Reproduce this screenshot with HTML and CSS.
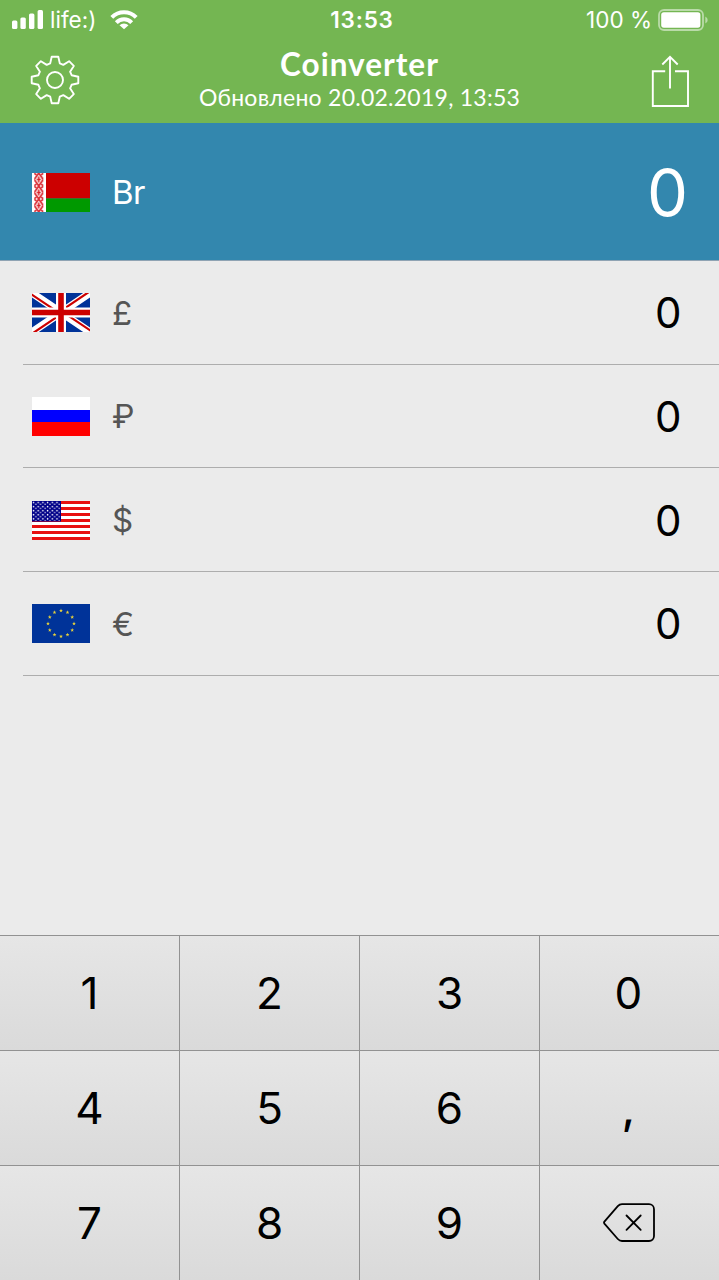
FILE: index.html
```html
<!DOCTYPE html>
<html lang="ru">
<head>
    <meta charset="UTF-8">
    <meta name="viewport" content="width=device-width, initial-scale=1.0">
    <title>Coinverter</title>
    <link rel="stylesheet" href="styles.css">
</head>
<body>
    <header>
        <div class="status-bar">
            <div class="carrier">
                <svg width="32" height="20" viewBox="0 0 32 20" fill="#fff">
                    <rect x="0" y="10.5" width="5.4" height="8.5" rx="1.5"/>
                    <rect x="8.4" y="7.5" width="5.4" height="11.5" rx="1.5"/>
                    <rect x="17" y="3.5" width="5.4" height="15.5" rx="1.5"/>
                    <rect x="25.6" y="0" width="5.4" height="19" rx="1.5"/>
                </svg>
                <span class="operator">life:)</span>
                <svg width="28" height="20" viewBox="0 0 28 20">
                    <g fill="none" stroke="#fff" stroke-width="4">
                        <path d="M1.8 7.3a17.2 17.2 0 0 1 24.4 0"/>
                        <path d="M6.3 12.6a10.8 10.8 0 0 1 15.4 0"/>
                    </g>
                    <path d="M14 19.2l-4.5-3.9a6.3 6.3 0 0 1 9 0z" fill="#fff"/>
                </svg>
            </div>
            <span class="time">13:53</span>
            <div class="power">
                <span class="percent">100 %</span>
                <svg width="50" height="22" viewBox="0 0 50 22">
                    <rect x="1" y="1" width="44" height="20" rx="5" fill="none" stroke="#fff" stroke-opacity=".5" stroke-width="1.8"/>
                    <rect x="3.2" y="3.3" width="39.2" height="15.4" rx="2.6" fill="#fff"/>
                    <path d="M47.3 7.5q2.4 1 2.4 3.5t-2.4 3.5z" fill="#fff" fill-opacity=".5"/>
                </svg>
            </div>
        </div>
        <div class="nav-bar">
            <svg class="gear" width="50" height="50" viewBox="-25 -25 50 50" fill="none" stroke="#fff" stroke-width="1.9" stroke-linejoin="round">
                <path d="M-3.3-23.3H3.3L4.8-16.6 8.3-15.1 14.1-18.8 18.8-14.1 15.1-8.3 16.6-4.8 23.3-3.3V3.3L16.6 4.8 15.1 8.3 18.8 14.1 14.1 18.8 8.3 15.1 4.8 16.6 3.3 23.3H-3.3L-4.8 16.6-8.3 15.1-14.1 18.8-18.8 14.1-15.1 8.3-16.6 4.8-23.3 3.3V-3.3L-16.6-4.8-15.1-8.3-18.8-14.1-14.1-18.8-8.3-15.1-4.8-16.6z"/>
                <circle r="8"/>
            </svg>
            <div class="heading">
                <h1>Coinverter</h1>
                <p>Обновлено 20.02.2019, 13:53</p>
            </div>
            <svg class="share" width="38" height="53" viewBox="0 0 38 53" fill="none" stroke="#fff" stroke-width="1.9">
                <path d="M14.2 16.2H1.8V51H37V16.2H24"/>
                <path d="M19 33.5V2M11.3 9.5L19 1.8l7.7 7.7"/>
            </svg>
        </div>
    </header>

    <main>
        <div class="row active">
            <svg class="flag" viewBox="0 0 58 39">
                <defs>
                    <pattern id="ornament" width="9" height="13" patternUnits="userSpaceOnUse">
                        <path d="M4.5 0L9 6.5 4.5 13 0 6.5z" fill="none" stroke="#d8222a" stroke-width="1.6"/>
                        <path d="M4.5 3.5v6M2.5 6.5h4M0 0l2 2M9 0L7 2M0 13l2-2M9 13l-2-2" stroke="#d8222a" stroke-width="1.6"/>
                    </pattern>
                </defs>
                <path fill="#fff" d="M0 0h14v39H0z"/>
                <path fill="#c00" d="M14 0h44v25.5H14z"/>
                <path fill="#090" d="M14 25.5h44V39H14z"/>
                <g transform="translate(2.3)">
                    <path fill="url(#ornament)" d="M0 0h9v39H0z"/>
                </g>
            </svg>
            <span class="symbol">Br</span>
            <span class="amount">0</span>
        </div>
        <div class="row">
            <svg class="flag" viewBox="0 0 58 39">
                <path fill="#039" d="M0 0h58v39H0z"/>
                <path d="M0 0l58 39M58 0L0 39" stroke="#fff" stroke-width="7.6"/>
                <path d="M-.8 1.2L28.2 20.7M58.8 37.8L29.8 18.3M57.2-1.2L28.2 18.3M.8 40.2L29.8 20.7" stroke="#c00" stroke-width="2.2"/>
                <path d="M29 0v39M0 19.5h58" stroke="#fff" stroke-width="10"/>
                <path d="M29 0v39M0 19.5h58" stroke="#c00" stroke-width="5.6"/>
            </svg>
            <span class="symbol">£</span>
            <span class="amount">0</span>
        </div>
        <div class="row">
            <svg class="flag" viewBox="0 0 58 39">
                <path fill="#fff" d="M0 0h58v13H0z"/>
                <path fill="#00f" d="M0 13h58v12H0z"/>
                <path fill="#f00" d="M0 25h58v14H0z"/>
            </svg>
            <span class="symbol rouble">₽</span>
            <span class="amount">0</span>
        </div>
        <div class="row">
            <svg class="flag" viewBox="0 0 58 39">
                <defs>
                    <pattern id="stars" width="4.7" height="4.1" patternUnits="userSpaceOnUse">
                        <circle cx="1.5" cy="1.4" r=".8" fill="#fff"/>
                        <circle cx="3.8" cy="3.3" r=".7" fill="#fff"/>
                    </pattern>
                </defs>
                <path fill="#fff" d="M0 0h58v39H0z"/>
                <path d="M0 1.5h58M0 7.5h58M0 13.5h58M0 19.5h58M0 25.5h58M0 31.5h58M0 37.5h58" stroke="#e81010" stroke-width="3"/>
                <path fill="#008" d="M0 0h29v20.5H0z"/>
                <path fill="url(#stars)" d="M0 0h28v20H0z"/>
            </svg>
            <span class="symbol">$</span>
            <span class="amount">0</span>
        </div>
        <div class="row">
            <svg class="flag" viewBox="0 0 58 39">
                <defs>
                    <path id="star" fill="#e8d23a" d="M0-2L.5-.6H1.9L.8.3 1.2 1.7 0 .9-1.2 1.7-.8.3-1.9-.6H-.5z"/>
                </defs>
                <path fill="#039" d="M0 0h58v39H0z"/>
                <use href="#star" x="29" y="6.6"/>
                <use href="#star" x="35.5" y="8.3"/>
                <use href="#star" x="40.2" y="13.1"/>
                <use href="#star" x="42" y="19.5"/>
                <use href="#star" x="40.2" y="26"/>
                <use href="#star" x="35.5" y="30.7"/>
                <use href="#star" x="29" y="32.4"/>
                <use href="#star" x="22.5" y="30.7"/>
                <use href="#star" x="17.8" y="26"/>
                <use href="#star" x="16" y="19.5"/>
                <use href="#star" x="17.8" y="13.1"/>
                <use href="#star" x="22.5" y="8.3"/>
            </svg>
            <span class="symbol">€</span>
            <span class="amount">0</span>
        </div>
    </main>

    <div class="keypad">
        <button>1</button>
        <button>2</button>
        <button>3</button>
        <button>0</button>
        <button>4</button>
        <button>5</button>
        <button>6</button>
        <button class="comma">,</button>
        <button>7</button>
        <button>8</button>
        <button>9</button>
        <button aria-label="Удалить">
            <svg width="52" height="40" viewBox="0 0 52 40" fill="none" stroke="#000" stroke-width="1.8" stroke-linecap="round" stroke-linejoin="round">
                <path d="M19 1.2H46a5 5 0 0 1 5 5V33a5 5 0 0 1-5 5H19q-2.4 0-4.2-2L1.4 20.6q-.8-1 0-2L14.8 3.2Q16.6 1.2 19 1.2z"/>
                <path d="M23.5 12.5l14.2 14.4M37.7 12.5L23.5 26.9"/>
            </svg>
        </button>
    </div>
</body>
</html>
```

FILE: styles.css
```css
* {
    box-sizing: border-box;
}

body {
    display: flex;
    flex-direction: column;
    height: 1280px;
    margin: 0;
    overflow: hidden;
    background-color: #ebebeb;
    font-family: Inter, "Liberation Sans", sans-serif;
}

svg {
    display: block;
    flex: none;
}

header {
    height: 123px;
    background-color: #74b652;
    color: #fff;
}

.status-bar {
    display: grid;
    grid-template-columns: 1fr auto 1fr;
    align-items: center;
    height: 39px;
    padding: 0 11px 0 12px;
    font-size: 22.5px;
}

.carrier,
.power {
    display: flex;
    align-items: center;
}

.operator {
    margin: 0 14px 0 6px;
    font-size: 22.5px;
}

.time {
    padding-left: 4px;
    font-weight: 600;
    letter-spacing: 0.8px;
}

.power {
    justify-content: flex-end;
    gap: 6px;
}

.nav-bar {
    display: grid;
    grid-template-columns: 50px 1fr 50px;
    padding: 0 30px;
}

.gear {
    margin-top: 16px;
}

.share {
    margin-top: 16px;
    justify-self: end;
}

.heading {
    font-family: Lato, sans-serif;
    text-align: center;
    white-space: nowrap;
}

h1 {
    margin: 6px 0 0;
    font-size: 31.5px;
    line-height: 39px;
    font-weight: 700;
    letter-spacing: 1px;
}

.heading p {
    margin: 0;
    font-size: 23px;
    line-height: 26px;
    letter-spacing: 0.25px;
}

.row {
    display: flex;
    align-items: center;
    height: 103.7px;
    margin-left: 23px;
    padding: 1px 37.5px 0 9.4px;
    border-bottom: 1px solid #adadad;
}

.active {
    height: 138px;
    margin-left: 0;
    padding: 1px 33px 0 32.4px;
    background-color: #3387ae;
    border-bottom-color: #8fa3b3;
    color: #fff;
}

.flag {
    width: 58px;
    height: 39px;
    margin-right: 21.5px;
}

.symbol {
    color: #555;
    font-size: 33px;
}

.rouble {
    font-size: 32px;
}

.amount {
    margin-left: auto;
    font-size: 42px;
}

.active .symbol {
    color: #fff;
    letter-spacing: -0.5px;
}

.active .amount {
    font-size: 65px;
    font-weight: 400;
    letter-spacing: -2px;
}

.keypad {
    display: grid;
    grid-template-columns: 180px 180px 180px 1fr;
    grid-auto-rows: 115px;
    height: 345px;
    margin-top: auto;
}

button {
    display: flex;
    justify-content: center;
    align-items: center;
    padding: 0;
    border: 0 solid #929292;
    border-top-width: 1px;
    border-right-width: 1px;
    background: linear-gradient(#e6e6e6, #dadada);
    color: #000;
    font-family: inherit;
    font-size: 44px;
}

button:nth-child(4n) {
    padding-right: 2px;
    border-right: 0;
}

.comma {
    font-weight: 500;
}
```
